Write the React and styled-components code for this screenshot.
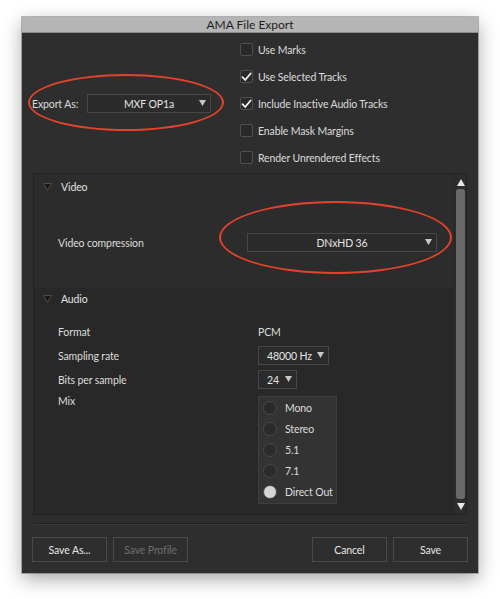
import React from "react";
import styled, { createGlobalStyle } from "styled-components";

const Global = createGlobalStyle`
  html, body { margin: 0; padding: 0; background: #ffffff; }
  body { font-family: Lato, "Open Sans", sans-serif; }
  * { box-sizing: border-box; }
`;

const Page = styled.div`
  width: 500px;
  height: 599px;
  padding: 17px 22px 0 22px;
`;

const Window = styled.div`
  position: relative;
  width: 456px;
  height: 556px;
  background: #2e2e2e;
  box-shadow: 0 6px 18px rgba(0, 0, 0, 0.35), 0 0 0 1px rgba(0, 0, 0, 0.25);
  display: flex;
  flex-direction: column;
  color: #dedede;
  font-size: 10.5px;
  letter-spacing: -0.12px;
`;

const TitleBar = styled.div`
  height: 16px;
  background: #b5b5b5;
  color: #1e1e1e;
  font-size: 12px;
  letter-spacing: 0;
  line-height: 15px;
  text-align: center;
  border-bottom: 1px solid #8e8e8e;
`;

const Top = styled.div`
  display: grid;
  grid-template-columns: 218px 1fr;
  padding-top: 3px;
  height: 140px;
`;

const ExportRow = styled.div`
  display: flex;
  align-items: center;
  padding-left: 10px;
  height: 135px;
`;

const Label = styled.span`
  color: #dcdcdc;
  white-space: nowrap;
`;

const ExportLabel = styled(Label)`
  width: 55px;
`;

const Select = styled.div`
  position: relative;
  width: ${(p) => p.$w}px;
  height: 19px;
  background: #2b2b2b;
  border: 1px solid #474747;
  display: flex;
  align-items: center;
  justify-content: ${(p) => (p.$center ? "center" : "flex-start")};
  padding-left: ${(p) => (p.$center ? 0 : 8)}px;
  color: #e4e4e4;
`;

const Arrow = styled.svg`
  position: absolute;
  right: 4px;
  top: 5px;
`;

const CheckList = styled.div`
  display: flex;
  flex-direction: column;
`;

const CheckRow = styled.div`
  height: 27px;
  display: flex;
  align-items: center;
  gap: 5px;
`;

const Box = styled.div`
  width: 13px;
  height: 13px;
  border: 1px solid #4f4f4f;
  border-radius: 2px;
  background: #2a2a2a;
  display: flex;
  align-items: center;
  justify-content: center;
`;

const Panel = styled.div`
  margin: 0 11px;
  height: 342px;
  border: 1px solid #222;
  display: flex;
  background: #282828;
`;

const PanelBody = styled.div`
  flex: 1;
  display: flex;
  flex-direction: column;
`;

const Section = styled.div`
  background: ${(p) => p.$bg};
  padding-bottom: ${(p) => p.$pb}px;
`;

const SectionHead = styled.div`
  height: ${(p) => p.$h}px;
  display: flex;
  align-items: center;
  padding-left: 9px;
  gap: 9px;
  color: #e2e2e2;
`;

const VideoRow = styled.div`
  margin-top: 33px;
  display: flex;
  align-items: center;
  padding-left: 24px;
`;

const VideoLabel = styled(Label)`
  width: 189px;
`;

const AudioGrid = styled.div`
  display: grid;
  grid-template-columns: 200px 1fr;
  padding-left: 24px;
  padding-top: 12px;
  row-gap: 5px;
`;

const Cell = styled.div`
  height: ${(p) => p.$h || 19}px;
  display: flex;
  align-items: ${(p) => (p.$top ? "flex-start" : "center")};
  margin-top: ${(p) => p.$mt || 0}px;
`;

const RadioBox = styled.div`
  margin-top: 2px;
  width: 79px;
  height: 108px;
  background: #333333;
  border: 1px solid #3e3e3e;
  padding-top: 0;
  display: flex;
  flex-direction: column;
`;

const RadioRow = styled.div`
  height: 21.2px;
  display: flex;
  align-items: center;
  padding-left: 4px;
  gap: 8px;
`;

const Circle = styled.div`
  width: 14px;
  height: 14px;
  border-radius: 50%;
  border: 1px solid #474747;
  background: ${(p) => (p.$on ? "#d4d4d4" : "#2b2b2b")};
`;

const Scroll = styled.div`
  width: 12px;
  background: #2d2d2d;
  border-left: 1px solid #262626;
  display: flex;
  flex-direction: column;
  align-items: center;
  padding-top: 5px;
  padding-bottom: 4px;
`;

const Thumb = styled.div`
  flex: 1;
  width: 9px;
  margin: 3px 0 4px;
  border-radius: 3px;
  background: #6a6a6a;
`;

const Separator = styled.div`
  margin: 8px 11px 0;
  height: 2px;
  border-top: 1px solid #232323;
  border-bottom: 1px solid #3a3a3a;
`;

const Footer = styled.div`
  display: flex;
  padding: 12px 10px 0;
  gap: 6px;
`;

const Spacer = styled.div`
  flex: 1;
`;

const Button = styled.div`
  width: 75px;
  height: 25px;
  border: 1px solid #4a4a4a;
  background: #2e2e2e;
  display: flex;
  align-items: center;
  justify-content: center;
  color: ${(p) => (p.$disabled ? "#6e6e6e" : "#e6e6e6")};
`;

const Ellipse = styled.div`
  position: absolute;
  left: ${(p) => p.$x}px;
  top: ${(p) => p.$y}px;
  width: ${(p) => p.$w}px;
  height: ${(p) => p.$h}px;
  border: 2px solid #e4432b;
  border-radius: 50%;
  pointer-events: none;
`;

const DownArrow = () => (
  <Arrow width="7" height="6" viewBox="0 0 7 6">
    <polygon points="0,0 7,0 3.5,6" fill="#c8c8c8" />
  </Arrow>
);

const Check = () => (
  <svg width="11" height="10" viewBox="0 0 11 10">
    <path d="M1.5 5.2 L4.2 8 L9.6 1.5" stroke="#f2f2f2" strokeWidth="1.8" fill="none" strokeLinecap="round" strokeLinejoin="round" />
  </svg>
);

const Disclosure = () => (
  <svg width="9" height="8" viewBox="0 0 9 8">
    <polygon points="0.5,0.5 8.5,0.5 4.5,7.5" fill="#1a1a1a" stroke="#555" strokeWidth="0.8" />
  </svg>
);

const checks = [
  ["Use Marks", false],
  ["Use Selected Tracks", true],
  ["Include Inactive Audio Tracks", true],
  ["Enable Mask Margins", false],
  ["Render Unrendered Effects", false],
];

const mixes = ["Mono", "Stereo", "5.1", "7.1", "Direct Out"];

export default function App() {
  return (
    <>
      <Global />
      <Page>
        <Window>
          <TitleBar>AMA File Export</TitleBar>
          <Top>
            <ExportRow>
              <ExportLabel>Export As:</ExportLabel>
              <Select $w={124} $center>
                MXF OP1a
                <DownArrow />
              </Select>
            </ExportRow>
            <CheckList>
              {checks.map(([t, on]) => (
                <CheckRow key={t}>
                  <Box>{on && <Check />}</Box>
                  <Label>{t}</Label>
                </CheckRow>
              ))}
            </CheckList>
          </Top>
          <Panel>
            <PanelBody>
              <Section $bg="#2c2c2c" $pb={36}>
                <SectionHead $h={26}>
                  <Disclosure />
                  Video
                </SectionHead>
                <VideoRow>
                  <VideoLabel>Video compression</VideoLabel>
                  <Select $w={190} $center>
                    DNxHD 36
                    <DownArrow />
                  </Select>
                </VideoRow>
              </Section>
              <Section $bg="#282828" $pb={0}>
                <SectionHead $h={22}>
                  <Disclosure />
                  Audio
                </SectionHead>
                <AudioGrid>
                  <Cell><Label>Format</Label></Cell>
                  <Cell><Label>PCM</Label></Cell>
                  <Cell><Label>Sampling rate</Label></Cell>
                  <Cell>
                    <Select $w={71}>
                      48000 Hz
                      <DownArrow />
                    </Select>
                  </Cell>
                  <Cell><Label>Bits per sample</Label></Cell>
                  <Cell>
                    <Select $w={39}>
                      24
                      <DownArrow />
                    </Select>
                  </Cell>
                  <Cell $top $h={14} $mt={1}><Label>Mix</Label></Cell>
                  <div>
                    <RadioBox>
                      {mixes.map((m) => (
                        <RadioRow key={m}>
                          <Circle $on={m === "Direct Out"} />
                          <Label>{m}</Label>
                        </RadioRow>
                      ))}
                    </RadioBox>
                  </div>
                </AudioGrid>
              </Section>
            </PanelBody>
            <Scroll>
              <svg width="8" height="7" viewBox="0 0 8 7">
                <polygon points="4,0 8,7 0,7" fill="#e8e8e8" />
              </svg>
              <Thumb />
              <svg width="8" height="7" viewBox="0 0 8 7">
                <polygon points="0,0 8,0 4,7" fill="#e8e8e8" />
              </svg>
            </Scroll>
          </Panel>
          <Separator />
          <Footer>
            <Button>Save As...</Button>
            <Button $disabled>Save Profile</Button>
            <Spacer />
            <Button>Cancel</Button>
            <Button>Save</Button>
          </Footer>
          <Ellipse $x={6} $y={57} $w={196} $h={57} />
          <Ellipse $x={197} $y={184} $w={233} $h={73} />
        </Window>
      </Page>
    </>
  );
}
